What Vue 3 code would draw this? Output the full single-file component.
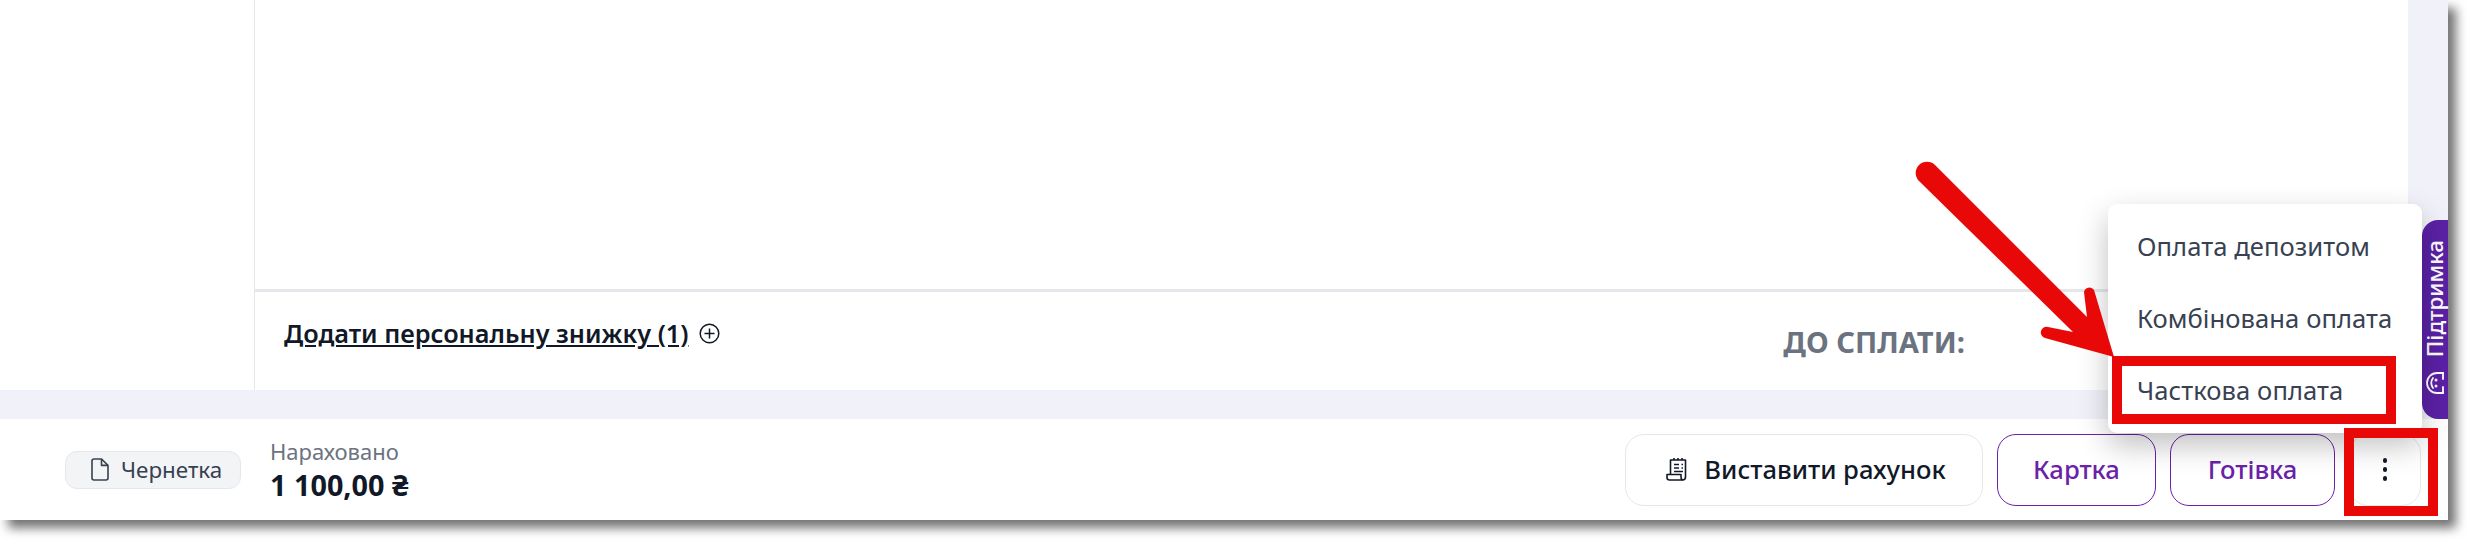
<template>
  <div class="frame">
    <div class="page">
      <div class="main">
        <div class="side"></div>
        <div class="content">
          <div class="blank"></div>
          <div class="total-row">
            <a class="discount">Додати персональну знижку (1)</a>
            <svg class="plus" viewBox="0 0 21 21" fill="none" stroke="#111827" stroke-width="1.5">
              <circle cx="10.5" cy="10.5" r="9.3" />
              <path d="M10.5 5.5v10M5.5 10.5h10" />
            </svg>
            <span class="to-pay">ДО СПЛАТИ:</span>
          </div>
        </div>
        <div class="strip"></div>
      </div>
      <div class="band"></div>
      <div class="footer">
        <div class="status">
          <div class="chip">
            <svg class="doc" viewBox="0 0 18 23" fill="none" stroke="#374151" stroke-width="1.6" stroke-linejoin="round">
              <path d="M3 1h7.5L17 7.4V20a2 2 0 0 1-2 2H3a2 2 0 0 1-2-2V3a2 2 0 0 1 2-2z" />
              <path d="M10.5 1v6.4H17" />
            </svg>
            <span>Чернетка</span>
          </div>
          <div class="accrued">
            <span class="accrued-label">Нараховано</span>
            <span class="accrued-sum">1 100,00 ₴</span>
          </div>
        </div>
        <div class="actions">
          <button class="btn invoice">
            <svg class="receipt" viewBox="0 0 22 23" fill="none" stroke="#111827" stroke-width="1.6" stroke-linejoin="round">
              <path d="M4.500 16.500V2H19.500V19a3 3 0 0 1-3 3" />
              <path d="M1 16.500H15V19a3 3 0 0 0 1.500 3H3.500A2.500 2.500 0 0 1 1 19.500z" />
              <path d="M8 0v2M12 0v2M16 0v2M8 6.500h5M15.500 6.500h1.500M8 10h5M15.500 10h1.500M8 13.500h9" />
            </svg>
            Виставити рахунок
          </button>
          <button class="btn pay card">Картка</button>
          <button class="btn pay cash">Готівка</button>
          <button class="btn more">
            <i></i><i></i><i></i>
          </button>
        </div>
      </div>

      <div class="support">
        <span>Підтримка</span>
        <svg class="support-icon" viewBox="0 0 20 24" fill="none" stroke="#fff" stroke-width="1.8" stroke-linecap="round">
          <path d="M18 2H12A10 10 0 0 0 12 22H18" />
          <path d="M18 2V8M18 16V22" />
          <path d="M8 7Q4.500 12 8 17" />
          <circle cx="11" cy="9" r=".6" />
          <circle cx="11" cy="15" r=".6" />
        </svg>
      </div>

      <div class="menu">
        <div class="menu-item">Оплата депозитом</div>
        <div class="menu-item">Комбінована оплата</div>
        <div class="menu-item">Часткова оплата</div>
      </div>

      <div class="mark mark-item"></div>
      <div class="mark mark-more"></div>
      <svg class="arrow" viewBox="0 0 2448 520">
        <path d="M2114 357 L2094 290 A5.500 5.500 0 0 0 2084 292 L2087 317 L1935 165 A11 11 0 0 0 1919 181 L2073 332 L2048 327 A5.500 5.500 0 0 0 2045 338 Z" fill="#e90808" />
      </svg>
    </div>
  </div>
</template>

<script setup>
</script>

<style>
body {
  background: #fff;
}
</style>

<style scoped>
.frame {
  width: 2468px;
  height: 540px;
  background: #fff;
  overflow: hidden;
}

.page {
  position: relative;
  width: 2448px;
  height: 520px;
  display: flex;
  flex-direction: column;
  background: #fff;
  font-family: "Noto Sans", "Liberation Sans", sans-serif;
  color: #111827;
  box-shadow: 8px 8px 10px rgba(0, 0, 0, 0.55);
}

.main {
  height: 390px;
  display: flex;
}

.side {
  width: 254px;
  border-right: 1px solid #e5e7eb;
}

.content {
  flex: 1;
  display: flex;
  flex-direction: column;
}

.blank {
  height: 289px;
  border-bottom: 3px solid #e5e7eb;
}

.total-row {
  flex: 1;
  display: flex;
  align-items: flex-start;
  padding: 23px 443px 0 29px;
}

.discount {
  font-size: 25.3px;
  line-height: 36px;
  font-weight: 600;
  text-decoration: underline;
}

.plus {
  width: 21px;
  height: 21px;
  margin: 8px 0 0 10px;
}

.to-pay {
  margin: 7px 0 0 auto;
  font-size: 29.2px;
  line-height: 40px;
  font-weight: 700;
  color: #6b7280;
}

.strip {
  width: 40px;
  background: #f1f1f9;
}

.band {
  height: 29px;
  background: #f1f1f9;
}

.footer {
  flex: 1;
  display: flex;
  align-items: center;
  justify-content: space-between;
  padding: 0 27px 0 65px;
}

.status {
  display: flex;
  align-items: center;
  gap: 29px;
}

.chip {
  display: flex;
  align-items: center;
  gap: 12px;
  width: 176px;
  height: 38px;
  box-sizing: border-box;
  padding-left: 25px;
  background: #f3f4f6;
  border: 1px solid #e5e7eb;
  border-radius: 12px;
  font-size: 22.4px;
  color: #374151;
}

.doc {
  width: 18px;
  height: 23px;
}

.accrued {
  display: flex;
  flex-direction: column;
}

.accrued-label {
  font-size: 22px;
  line-height: 30px;
  color: #6b7280;
}

.accrued-sum {
  font-size: 28.8px;
  line-height: 38px;
  font-weight: 700;
}

.actions {
  display: flex;
  gap: 14px;
}

.btn {
  height: 72px;
  box-sizing: border-box;
  background: #fff;
  border: 1.5px solid #e5e7eb;
  border-radius: 19px;
  font-family: inherit;
  font-size: 25.6px;
  font-weight: 500;
  color: #111827;
  padding: 0;
}

.invoice {
  width: 358px;
  display: flex;
  align-items: center;
  justify-content: center;
  gap: 16px;
  padding-left: 4px;
}

.receipt {
  width: 22px;
  height: 23px;
}

.pay {
  border-color: #6b21a8;
  color: #6b21a8;
}

.card {
  width: 159px;
}

.cash {
  width: 165px;
}

.more {
  width: 72px;
  display: flex;
  flex-direction: column;
  align-items: center;
  justify-content: center;
  gap: 4.5px;
}

.more i {
  width: 4.5px;
  height: 4.5px;
  border-radius: 50%;
  background: #111827;
}

.support {
  position: absolute;
  left: 2422px;
  top: 220px;
  width: 26px;
  height: 199px;
  display: flex;
  flex-direction: column;
  align-items: center;
  box-sizing: border-box;
  padding-top: 20px;
  gap: 14px;
  background: #5b21a6;
  border-radius: 16px 0 0 16px;
  color: #fff;
  font-size: 22.4px;
  font-weight: 500;
}

.support span {
  writing-mode: vertical-rl;
  transform: rotate(180deg);
  line-height: 26px;
}

.support-icon {
  width: 20px;
  height: 24px;
  flex-shrink: 0;
}

.menu {
  position: absolute;
  left: 2108px;
  top: 204px;
  width: 314px;
  height: 229px;
  box-sizing: border-box;
  padding-top: 6px;
  background: #fff;
  border-radius: 9px;
  box-shadow: 0 12px 30px rgba(0, 0, 0, 0.25);
}

.menu-item {
  height: 72px;
  display: flex;
  align-items: center;
  padding-left: 29px;
  font-size: 25.6px;
  letter-spacing: 0.06px;
  color: #374151;
}

.mark {
  position: absolute;
  box-sizing: border-box;
  border: 10px solid #e90808;
}

.mark-item {
  left: 2112px;
  top: 356px;
  width: 284px;
  height: 68px;
}

.mark-more {
  left: 2344px;
  top: 428px;
  width: 94px;
  height: 88px;
}

.arrow {
  position: absolute;
  left: 0;
  top: 0;
  width: 2448px;
  height: 520px;
  pointer-events: none;
}
</style>
